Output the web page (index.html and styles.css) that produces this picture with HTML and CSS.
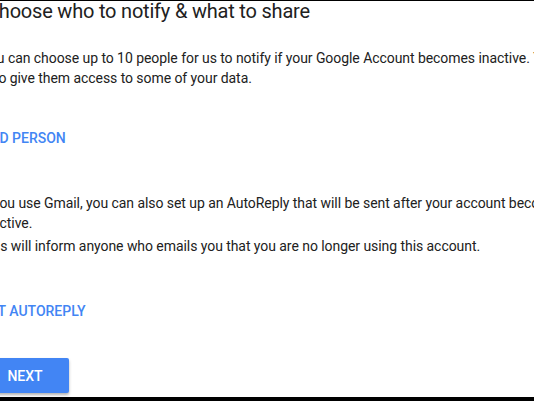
FILE: index.html
```html
<!DOCTYPE html>
<html lang="en">
<head>
  <meta charset="UTF-8">
  <title>Inactive Account Manager</title>
  <link rel="stylesheet" href="styles.css">
</head>
<body>
  <div class="frame">
    <div class="page">
      <h1 class="title">Choose who to notify &amp; what to share</h1>
      <p class="text first">You can choose up to 10 people for us to notify if your Google Account becomes inactive. You can also choose<br><span class="cont">to give them access to some of your data.</span></p>
      <a class="link add" href="#">Add person</a>
      <p class="text gmail">If you use Gmail, you can also set up an AutoReply that will be sent after your account becomes<br>inactive.</p>
      <p class="text inform">This will inform anyone who emails you that you are no longer using this account.</p>
      <a class="link reply" href="#">Set autoreply</a>
      <button class="next">Next</button>
    </div>
  </div>
</body>
</html>
```

FILE: styles.css
```css
html, body { margin: 0; padding: 0; background: #fff; overflow: hidden; }
body { font-family: Roboto, "Liberation Sans", Arial, sans-serif; color: #212121; }
.frame { height: 401px; box-sizing: border-box; border-top: 1px solid #000; border-bottom: 4px solid #000; overflow: hidden; }
.page { margin-left: -19px; width: 900px; }
.title { font-size: 20px; font-weight: 400; line-height: 21px; letter-spacing: -0.2px; margin: 0 0 0 5px; white-space: nowrap; }
.text { font-size: 14px; line-height: 20px; letter-spacing: -0.06px; margin: 0; white-space: nowrap; }
.cont { display: inline-block; padding-left: 13px; }
.first { margin-top: 26px; }
.gmail { margin-top: 45px; }
.inform { margin-top: 3px; }
.link { display: block; font-size: 14px; line-height: 20px; font-weight: 500; color: #4285f4; text-decoration: none; text-transform: uppercase; }
.add { margin-top: 40px; }
.reply { margin-top: 45px; }
.next { display: block; margin-top: 37px; height: 35px; min-width: 88px; padding: 0 16px; border: 0; border-radius: 2px; background: #4285f4; color: #fff; font-family: inherit; font-size: 14px; font-weight: 500; text-transform: uppercase; box-shadow: 0 2px 3px rgba(0,0,0,0.3); }
```
